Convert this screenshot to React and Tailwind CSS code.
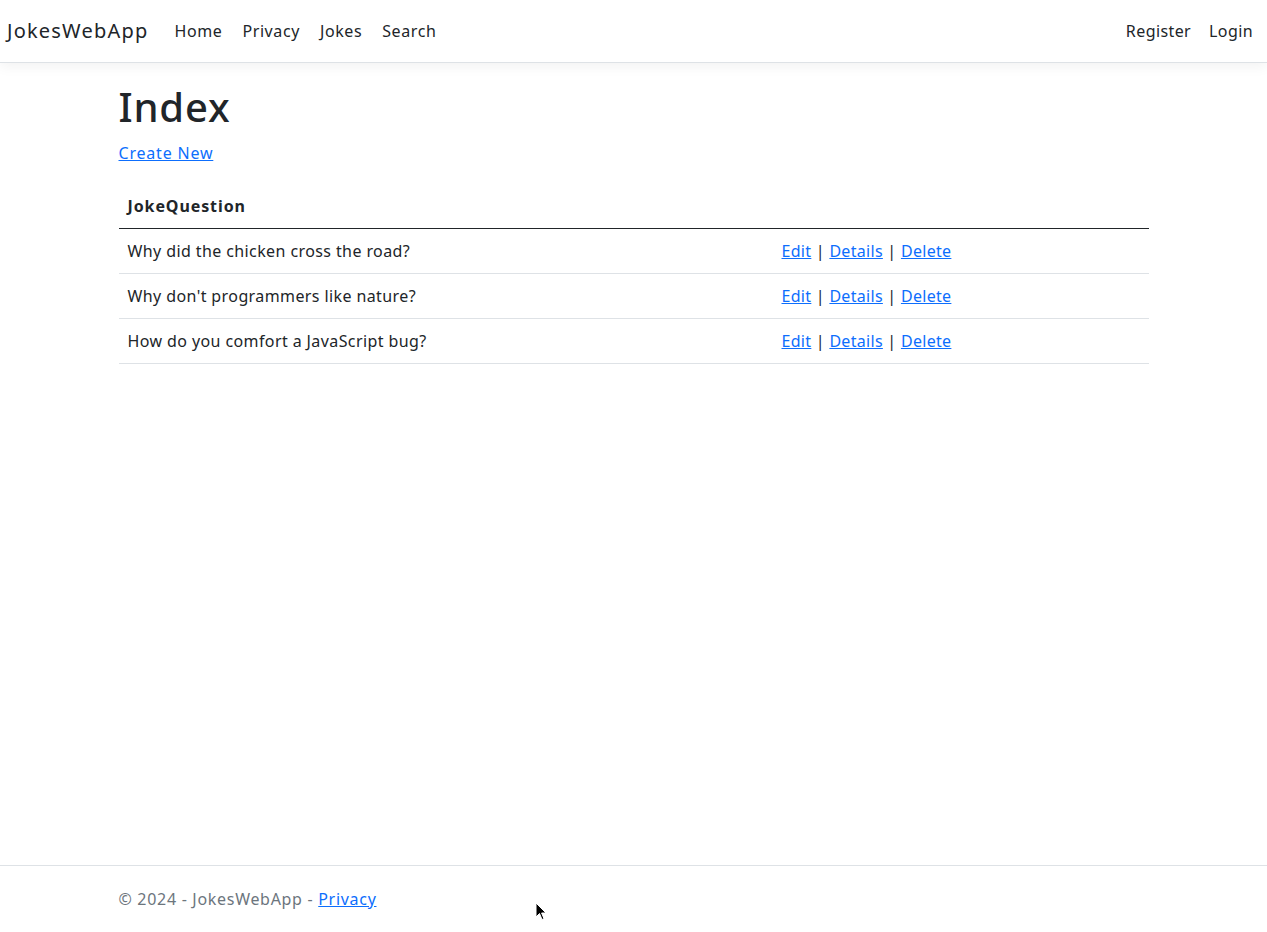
import React from 'react';

const jokes = [
  'Why did the chicken cross the road?',
  "Why don't programmers like nature?",
  'How do you comfort a JavaScript bug?',
];

const font = { fontFamily: '"Noto Sans", "Open Sans", sans-serif' };

export default function App() {
  return (
    <div className="min-h-screen flex flex-col bg-white text-[#212529] text-[16px] tracking-[0.4px]" style={font}>
      <header className="h-[63px] border-b border-[#dee2e6] shadow-[0_4px_12px_rgba(0,0,0,0.05)] flex items-center pl-[7px] pr-[5px]">
        <a className="text-[20px] tracking-[1.2px] mr-[16px] leading-[30px]">JokesWebApp</a>
        <nav className="flex">
          {['Home', 'Privacy', 'Jokes', 'Search'].map((l) => (
            <a key={l} className="px-[10px] tracking-[0.6px] leading-6">{l}</a>
          ))}
        </nav>
        <nav className="flex ml-auto">
          {['Register', 'Login'].map((l) => (
            <a key={l} className="px-[9px] leading-6">{l}</a>
          ))}
        </nav>
      </header>

      <main className="flex-1 w-[1030px] mx-auto pt-[20px]">
        <h1 className="text-[40px] font-medium tracking-[0.8px] leading-[48px] mb-[10px]">Index</h1>
        <p className="leading-6 mb-[19px]">
          <a className="text-[#0d6efd] underline tracking-[0.8px]">Create New</a>
        </p>
        <table className="w-full border-collapse">
          <thead>
            <tr className="border-b border-[#212529]">
              <th className="text-left font-bold tracking-[0.9px] px-[9px] py-[10px] leading-6 w-[654px]">JokeQuestion</th>
              <th className="px-[9px] py-[10px]"></th>
            </tr>
          </thead>
          <tbody>
            {jokes.map((j) => (
              <tr key={j} className="border-b border-[#dee2e6]">
                <td className="px-[9px] py-[10px] leading-6">{j}</td>
                <td className="px-[9px] py-[10px] leading-6 tracking-[0.3px]">
                  <a className="text-[#0d6efd] underline">Edit</a> |{' '}
                  <a className="text-[#0d6efd] underline">Details</a> |{' '}
                  <a className="text-[#0d6efd] underline">Delete</a>
                </td>
              </tr>
            ))}
          </tbody>
        </table>
      </main>

      <footer className="border-t border-[#dee2e6] h-[67px] relative">
        <div className="w-[1030px] mx-auto leading-[66px] text-[#6c757d] tracking-[0.7px]">
          © 2024 - JokesWebApp - <a className="text-[#0d6efd] underline">Privacy</a>
        </div>
        <svg className="absolute left-[535px] top-[36px]" width="12" height="19" viewBox="0 0 12 19">
          <path d="M1 1 L1 15 L4.5 11.5 L7 17.5 L9 16.7 L6.6 11 L11 11 Z" fill="#000" stroke="#fff" strokeWidth="1" />
        </svg>
      </footer>
    </div>
  );
}
